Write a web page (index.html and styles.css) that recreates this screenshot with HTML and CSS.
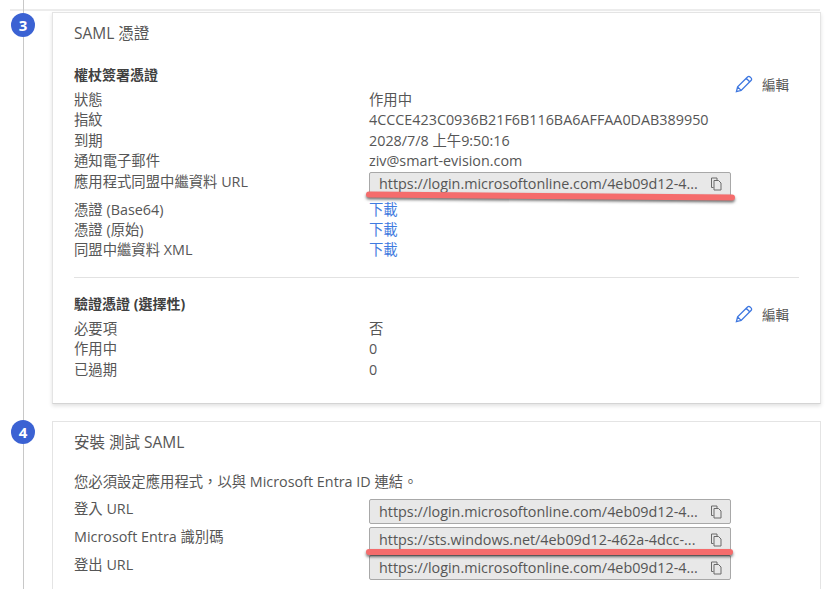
FILE: index.html
```html
<!DOCTYPE html>
<html lang="zh-Hant">
<head>
    <meta charset="UTF-8">
    <meta name="viewport" content="width=device-width, initial-scale=1.0">
    <title>SAML 憑證</title>
    <link rel="stylesheet" href="styles.css">
</head>
<body>

    <div class="top-rule"></div>

    <div class="step">
        <div class="step-rail"><span class="step-badge">3</span></div>
        <section class="card card-cert">
            <h2 class="card-title">SAML 憑證</h2>

            <div class="block">
                <a class="edit"><svg class="edit-icon" viewBox="0 0 20 20"><path d="M1.6 18.4l1.3-5.2L13.9 2.2a2 2 0 0 1 2.9 0l1 1a2 2 0 0 1 0 2.9L6.800 17.100z M12.400 3.700l3.900 3.900 M2.900 13.200l3.900 3.900" /></svg>編輯</a>
                <h3 class="block-title">權杖簽署憑證</h3>
                <div class="row"><span class="row-label">狀態</span><span>作用中</span></div>
                <div class="row"><span class="row-label">指紋</span><span>4CCCE423C0936B21F6B116BA6AFFAA0DAB389950</span></div>
                <div class="row"><span class="row-label">到期</span><span>2028/7/8 上午9:50:16</span></div>
                <div class="row"><span class="row-label">通知電子郵件</span><span>ziv@smart-evision.com</span></div>
                <div class="row row-field">
                    <span class="row-label">應用程式同盟中繼資料 URL</span>
                    <div class="field"><span class="field-text">https://login.microsoftonline.com/4eb09d12-4...</span><svg class="copy-icon" viewBox="0 0 12 14"><path d="M3.500 10.500H1.500V1h5.500v2.500 M4 3.500h4.500L11 6v7H4z" /></svg></div>
                </div>
                <div class="row"><span class="row-label">憑證 (Base64)</span><a class="link">下載</a></div>
                <div class="row"><span class="row-label">憑證 (原始)</span><a class="link">下載</a></div>
                <div class="row"><span class="row-label">同盟中繼資料 XML</span><a class="link">下載</a></div>
            </div>

            <hr class="divider">

            <div class="block">
                <a class="edit"><svg class="edit-icon" viewBox="0 0 20 20"><path d="M1.6 18.4l1.3-5.2L13.9 2.2a2 2 0 0 1 2.9 0l1 1a2 2 0 0 1 0 2.9L6.800 17.100z M12.400 3.700l3.900 3.900 M2.900 13.200l3.900 3.900" /></svg>編輯</a>
                <h3 class="block-title">驗證憑證 (選擇性)</h3>
                <div class="row"><span class="row-label">必要項</span><span>否</span></div>
                <div class="row"><span class="row-label">作用中</span><span>0</span></div>
                <div class="row"><span class="row-label">已過期</span><span>0</span></div>
            </div>
        </section>
    </div>

    <div class="step step-last">
        <div class="step-rail"><span class="step-badge">4</span></div>
        <section class="card card-setup">
            <h2 class="card-title">安裝 測試 SAML</h2>
            <p class="card-note">您必須設定應用程式，以與 Microsoft Entra ID 連結。</p>
            <div class="row row-url">
                <span class="row-label">登入 URL</span>
                <div class="field"><span class="field-text">https://login.microsoftonline.com/4eb09d12-4...</span><svg class="copy-icon" viewBox="0 0 12 14"><path d="M3.500 10.500H1.500V1h5.500v2.500 M4 3.500h4.500L11 6v7H4z" /></svg></div>
            </div>
            <div class="row row-url">
                <span class="row-label">Microsoft Entra 識別碼</span>
                <div class="field"><span class="field-text">https://sts.windows.net/4eb09d12-462a-4dcc-...</span><svg class="copy-icon" viewBox="0 0 12 14"><path d="M3.500 10.500H1.500V1h5.500v2.500 M4 3.500h4.500L11 6v7H4z" /></svg></div>
            </div>
            <div class="row row-url">
                <span class="row-label">登出 URL</span>
                <div class="field"><span class="field-text">https://login.microsoftonline.com/4eb09d12-4...</span><svg class="copy-icon" viewBox="0 0 12 14"><path d="M3.500 10.500H1.500V1h5.500v2.500 M4 3.500h4.500L11 6v7H4z" /></svg></div>
            </div>
        </section>
    </div>

    <!-- hand drawn red marks over the two urls -->
    <div class="scribble scribble-one"></div>
    <div class="scribble scribble-two"></div>

</body>
</html>
```

FILE: styles.css
```css
html, body {
    height: 100%;
}
body {
    font-family: "Open Sans", "Noto Sans CJK TC", sans-serif;
    font-size: 14.350px;
    color: #565656;
    background-color: white;
    margin: 0;
    padding: 9px 0 0 10px;
    box-sizing: border-box;
    overflow: hidden;
    position: relative;
}
.top-rule {
    height: 2px;
    margin-right: 11px;
    background-color: #ececec;
}
.step {
    display: flex;
    margin-top: 1px;
}
.step-last {
    margin-top: 0;
    padding-top: 17px;
    position: relative;
}
.step-rail {
    width: 42px;
    flex-shrink: 0;
    position: relative;
}
.step-rail::before {
    content: "";
    position: absolute;
    left: 13px;
    top: -20px;
    bottom: 0;
    width: 1px;
    background-color: #c8c8c8;
}
.step:first-of-type .step-rail::before {
    top: 0;
    bottom: -17px;
}
.step-badge {
    position: relative;
    display: flex;
    align-items: center;
    justify-content: center;
    width: 24px;
    height: 24px;
    margin-left: 1px;
    margin-top: 1px;
    border-radius: 50%;
    background-color: #3b62d3;
    color: white;
    font-weight: bold;
    font-size: 15px;
}
.step-last .step-badge {
    margin-top: -1px;
}
.card {
    width: 769px;
    box-sizing: border-box;
    border: 1px solid #e4e4e4;
    border-bottom-color: #d4d4d4;
    box-shadow: 0 2px 4px rgba(0, 0, 0, 0.12);
    padding: 0 21px;
}
.card-cert {
    height: 392px;
}
.card-setup {
    height: 168px;
    border-bottom: none;
    box-shadow: none;
}
.card-title {
    font-size: 15.500px;
    font-weight: normal;
    line-height: 22px;
    margin: 9px 0 0;
}
.block {
    position: relative;
    margin-top: 21px;
}
.block-title {
    font-size: 14px;
    font-weight: bold;
    color: #404040;
    line-height: 20px;
    margin: 0 0 5px;
}
.row {
    display: flex;
    line-height: 20.400px;
}
.row-label {
    width: 295px;
    flex-shrink: 0;
}
.row-field {
    height: 28px;
}
.row-url {
    height: 28px;
    align-items: flex-start;
}
.row-url .row-label {
    line-height: 20px;
}
.link {
    color: #3f7be0;
}
.edit {
    position: absolute;
    right: 10px;
    top: 9px;
    display: flex;
    align-items: center;
    gap: 9px;
    font-size: 13.500px;
}
.edit-icon {
    width: 18px;
    height: 18px;
    fill: none;
    stroke: #3f78e0;
    stroke-width: 1.500;
}
.divider {
    border: none;
    height: 1px;
    background-color: #e2e2e2;
    margin: 16px 0 0;
}
.divider + .block {
    margin-top: 16px;
}
.divider + .block .edit {
    top: 10px;
}
.field {
    width: 362px;
    height: 25px;
    box-sizing: border-box;
    border: 1px solid #a8a8a8;
    border-radius: 2px;
    background-color: #e8e8e8;
    display: flex;
    align-items: center;
    justify-content: space-between;
    padding: 0 8px 0 9px;
    line-height: 22px;
}
.field-text {
    white-space: nowrap;
}
.copy-icon {
    width: 12px;
    height: 14px;
    fill: none;
    stroke: #6a6a6a;
    stroke-width: 1;
}
.card-note {
    margin: 19px 0 0;
    line-height: 20px;
}
.card-note + .row {
    margin-top: 7px;
}
.scribble {
    position: absolute;
    height: 6px;
    border-radius: 3px;
    background-color: #f56c6c;
    box-shadow: 0 2px 3px rgba(0, 0, 0, 0.55);
}
.scribble-one {
    left: 366px;
    top: 193px;
    width: 369px;
    transform: rotate(0.5deg);
}
.scribble-two {
    left: 366px;
    top: 549px;
    width: 367px;
}
```
